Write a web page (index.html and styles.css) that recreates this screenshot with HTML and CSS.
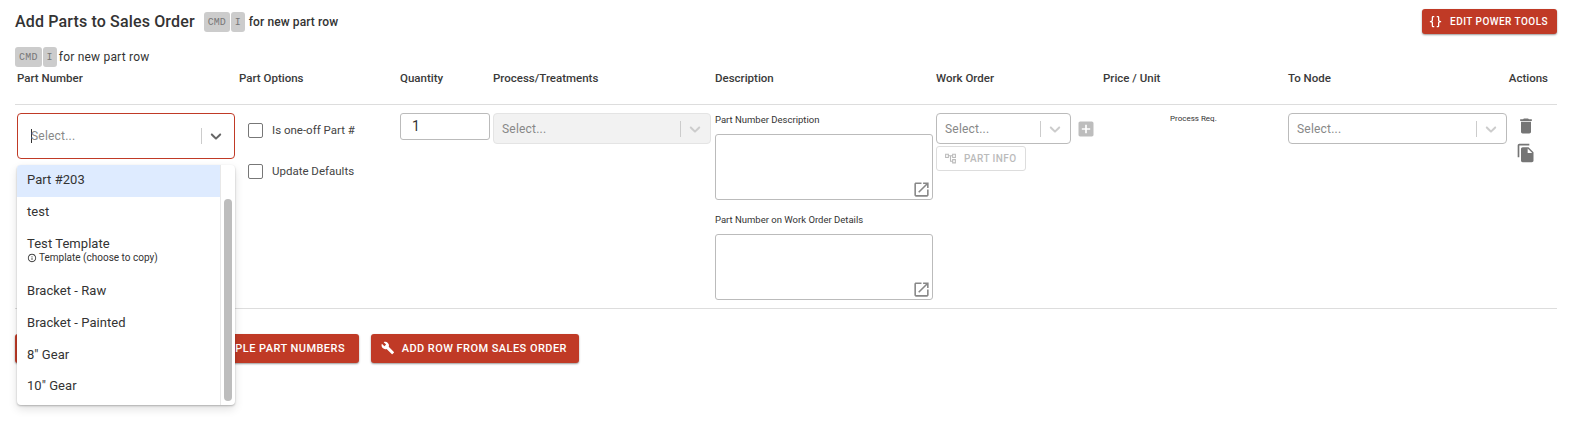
FILE: index.html
```html
<!DOCTYPE html>
<html lang="en">
<head>
  <meta charset="UTF-8" />
  <title>Add Parts to Sales Order</title>
  <link rel="stylesheet" href="styles.css">
</head>
<body>
  <svg class="defs" width="0" height="0">
    <symbol id="i-chevron" viewBox="0 0 20 20"><path d="M4.516 7.548c0.436-0.446 1.043-0.481 1.576 0l3.908 3.747 3.908-3.747c0.533-0.481 1.141-0.446 1.574 0 0.436 0.445 0.408 1.197 0 1.615-0.406 0.418-4.695 4.502-4.695 4.502-0.217 0.223-0.502 0.335-0.787 0.335s-0.57-0.112-0.789-0.335c0 0-4.287-4.084-4.695-4.502s-0.436-1.17 0-1.615z"/></symbol>
    <symbol id="i-open" viewBox="0 0 24 24"><path d="M19 19H5V5h7V3H5c-1.11 0-2 .9-2 2v14c0 1.1.89 2 2 2h14c1.1 0 2-.9 2-2v-7h-2v7zM14 3v2h3.59l-9.83 9.83 1.41 1.41L19 6.41V10h2V3h-7z"/></symbol>
  </svg>

  <!-- Header -->
  <div class="top-bar">
    <h1>Add Parts to Sales Order</h1>
    <span class="hint"><kbd>CMD</kbd><kbd>I</kbd><b>for new part row</b></span>
    <button class="btn btn-tools">
      <svg viewBox="0 0 24 24"><path d="M8,3A2,2 0 0,0 6,5V9A2,2 0 0,1 4,11H3V13H4A2,2 0 0,1 6,15V19A2,2 0 0,0 8,21H10V19H8V14A2,2 0 0,0 6,12A2,2 0 0,0 8,10V5H10V3M16,3A2,2 0 0,1 18,5V9A2,2 0 0,0 20,11H21V13H20A2,2 0 0,0 18,15V19A2,2 0 0,1 16,21H14V19H16V14A2,2 0 0,1 18,12A2,2 0 0,1 16,10V5H14V3H16Z"/></svg>
      Edit Power Tools
    </button>
  </div>
  <div class="hint hint-row"><kbd>CMD</kbd><kbd>I</kbd><span>for new part row</span></div>

  <!-- Table -->
  <div class="parts-table">
    <div class="grid head-row">
      <div>Part Number</div>
      <div>Part Options</div>
      <div>Quantity</div>
      <div>Process/Treatments</div>
      <div>Description</div>
      <div>Work Order</div>
      <div>Price / Unit</div>
      <div>To Node</div>
      <div class="right">Actions</div>
    </div>

    <div class="grid part-row">
      <div class="part-cell">
        <div class="select select-focus">
          <span class="placeholder"><i class="caret"></i>Select...</span>
          <span class="sep"></span>
          <svg class="chev"><use href="#i-chevron"/></svg>
        </div>
        <div class="menu">
          <div class="menu-list">
            <div class="option active">Part #203</div>
            <div class="option">test</div>
            <div class="option option-tall">
              Test Template
              <small>
                <svg viewBox="0 0 24 24"><path d="M11 7h2v2h-2zm0 4h2v6h-2zm1-9C6.48 2 2 6.48 2 12s4.48 10 10 10 10-4.48 10-10S17.52 2 12 2zm0 18c-4.41 0-8-3.59-8-8s3.59-8 8-8 8 3.59 8 8-3.59 8-8 8z"/></svg>
                Template (choose to copy)
              </small>
            </div>
            <div class="option">Bracket - Raw</div>
            <div class="option">Bracket - Painted</div>
            <div class="option">8" Gear</div>
            <div class="option option-last">10" Gear</div>
          </div>
          <div class="menu-track"><div class="menu-thumb"></div></div>
        </div>
      </div>

      <div class="options-cell">
        <label class="check"><i></i>Is one-off Part #</label>
        <label class="check"><i></i>Update Defaults</label>
      </div>

      <div class="qty-cell"><div class="qty">1</div></div>

      <div class="process-cell">
        <div class="select select-off">
          <span class="placeholder">Select...</span>
          <span class="sep"></span>
          <svg class="chev"><use href="#i-chevron"/></svg>
        </div>
      </div>

      <div class="desc-cell">
        <div class="small-label">Part Number Description</div>
        <div class="area"><svg class="open"><use href="#i-open"/></svg></div>
        <div class="small-label">Part Number on Work Order Details</div>
        <div class="area"><svg class="open"><use href="#i-open"/></svg></div>
      </div>

      <div class="wo-cell">
        <div class="wo-top">
          <div class="select">
            <span class="placeholder">Select...</span>
            <span class="sep"></span>
            <svg class="chev"><use href="#i-chevron"/></svg>
          </div>
          <svg class="add-box" viewBox="0 0 24 24"><path d="M19 3H5c-1.11 0-2 .9-2 2v14c0 1.1.89 2 2 2h14c1.1 0 2-.9 2-2V5c0-1.1-.9-2-2-2zm-2 10h-4v4h-2v-4H7v-2h4V7h2v4h4v2z"/></svg>
        </div>
        <button class="btn-info">
          <svg viewBox="0 0 24 24"><path d="M22 11V3h-7v3H9V3H2v8h7V8h2v10h4v3h7v-8h-7v3h-2V8h2v3h7zM7 9H4V5h3v4zm10 6h3v4h-3v-4zm0-10h3v4h-3V5z"/></svg>
          Part Info
        </button>
      </div>

      <div class="price-cell">Process Req.</div>

      <div class="node-cell">
        <div class="select">
          <span class="placeholder">Select...</span>
          <span class="sep"></span>
          <svg class="chev"><use href="#i-chevron"/></svg>
        </div>
      </div>

      <div class="actions-cell">
        <svg viewBox="0 0 24 24"><path d="M6 19c0 1.1.9 2 2 2h8c1.1 0 2-.9 2-2V7H6v12zM19 4h-3.5l-1-1h-5l-1 1H5v2h14V4z"/></svg>
        <svg viewBox="0 0 24 24"><path d="M16 1H4c-1.1 0-2 .9-2 2v14h2V3h12V1zm-1 4l6 6v10c0 1.1-.9 2-2 2H7.99C6.89 23 6 22.1 6 21l.01-14c0-1.1.89-2 1.99-2h7zm-1 7h5.5L14 6.5V12z"/></svg>
      </div>
    </div>
  </div>

  <!-- Footer buttons, the first one sits behind the open menu -->
  <div class="btn-row">
    <button class="btn btn-first" aria-label="Add row"></button>
    <button class="btn btn-multi">Add Multiple Part Numbers</button>
    <button class="btn btn-so">
      <svg viewBox="0 0 24 24"><path d="M22.7 19l-9.1-9.1c.9-2.3.4-5-1.5-6.9-2-2-5-2.4-7.4-1.3L9 6 6 9 1.6 4.7C.4 7.1.9 10.1 2.9 12.1c1.9 1.9 4.6 2.4 6.9 1.5l9.1 9.1c.4.4 1 .4 1.4 0l2.3-2.3c.5-.4.5-1.1.1-1.4z"/></svg>
      Add Row From Sales Order
    </button>
  </div>
</body>
</html>
```

FILE: styles.css
```css
* {
  margin: 0;
  padding: 0;
  box-sizing: border-box;
}

body {
  padding: 0 13px 0 15px;
  height: 445px;
  overflow: hidden;
  background-color: #fff;
  color: #212121;
  font-family: Roboto, sans-serif;
  font-size: 12px;
}

.defs {
  position: absolute;
}

.top-bar {
  display: flex;
  align-items: center;
  height: 43px;
}

.top-bar h1 {
  font-size: 16px;
  font-weight: 500;
  letter-spacing: 0.15px;
  margin-right: 9px;
  color: #333;
}

.hint {
  display: flex;
  align-items: center;
  font-size: 12px;
}

.hint b {
  font-weight: 500;
  margin-left: 3px;
  letter-spacing: 0.1px;
  color: #333;
}

.hint-row {
  height: 21px;
  margin-top: 3px;
  letter-spacing: 0.2px;
  color: #333;
}

.hint-row span {
  margin-left: 1px;
}

kbd {
  display: inline-block;
  height: 20px;
  line-height: 21px;
  padding: 0 4px;
  margin-right: 1px;
  background-color: #ccc;
  border-radius: 3px;
  color: #777;
  font-family: "Liberation Mono", monospace;
  font-size: 10px;
}

.btn {
  display: inline-flex;
  align-items: center;
  height: 29px;
  padding: 0 12px 0 8px;
  border: none;
  border-radius: 3px;
  background-color: #c03a26;
  color: #fff;
  font-family: Roboto, sans-serif;
  font-size: 11px;
  font-weight: 500;
  letter-spacing: 0.45px;
  text-transform: uppercase;
  white-space: nowrap;
  box-shadow: 0 1px 2px rgba(0, 0, 0, 0.4);
}

.btn svg {
  width: 16px;
  height: 16px;
  fill: #fff;
  margin-right: 7px;
}

.btn-tools {
  margin-left: auto;
  height: 25px;
  padding: 0 9px 0 6px;
  font-size: 10px;
  letter-spacing: 0.45px;
}

.btn-tools svg {
  width: 15px;
  height: 15px;
  margin-right: 7px;
}

.grid {
  display: grid;
  grid-template-columns: 222px 161px 93px 222px 221px 167px 185px 219px 1fr;
  padding-left: 2px;
  border-bottom: 1px solid #ddd;
}

.head-row {
  height: 38px;
  padding-top: 4px;
  font-size: 11.5px;
  font-weight: 500;
  color: #3a3a3a;
}

.head-row .right {
  text-align: right;
  padding-right: 9px;
  margin-left: -40px;
}

.part-row {
  height: 204px;
  padding-top: 8px;
}

.part-cell {
  position: relative;
}

.select {
  display: flex;
  align-items: center;
  width: 218px;
  height: 31px;
  padding-left: 8px;
  border: 1px solid #bbb;
  border-radius: 4px;
  background-color: #fff;
}

.select-focus {
  height: 46px;
  padding-left: 13px;
  border: 1.5px solid #c03a26;
}

.select-off {
  border-color: #e4e4e4;
  background-color: #f2f2f2;
}

.placeholder {
  flex: 1;
  color: #888;
  font-size: 12px;
  letter-spacing: 0.2px;
}

.caret {
  display: inline-block;
  width: 1px;
  height: 14px;
  margin-right: -1px;
  vertical-align: -3px;
  background-color: #333;
}

.sep {
  width: 1px;
  height: 16px;
  background-color: #ccc;
}

.chev {
  width: 18px;
  height: 18px;
  margin: 0 6px 0 5px;
  fill: #ccc;
}

.select-focus .chev {
  margin-right: 9px;
  fill: #666;
}

.menu {
  position: absolute;
  top: 52px;
  left: 0;
  z-index: 5;
  display: flex;
  width: 218px;
  height: 240px;
  border-radius: 4px;
  background-color: #fff;
  box-shadow: 0 1px 2px rgba(0, 0, 0, 0.25), 0 4px 10px rgba(0, 0, 0, 0.12);
  overflow: hidden;
}

.menu-list {
  flex: 1;
  border-right: 1px solid #e8e8e8;
}

.option {
  height: 32px;
  padding: 7px 10px;
  font-size: 13px;
  line-height: 15px;
  letter-spacing: 0.05px;
  color: #333;
}

.option.active {
  background-color: #deebff;
}

.option-tall {
  height: 47px;
}

.option-last {
  padding-top: 6px;
}

.option small {
  display: flex;
  align-items: center;
  margin-top: 1px;
  font-size: 10px;
  line-height: 12px;
  letter-spacing: 0;
}

.option small svg {
  width: 10px;
  height: 10px;
  margin-right: 2px;
  fill: #333;
}

.menu-track {
  width: 14px;
  padding: 34px 3px 4px;
}

.menu-thumb {
  height: 100%;
  border-radius: 4px;
  background-color: #bdbdbd;
}

.options-cell {
  padding: 9px 0 0 9px;
}

.check {
  display: flex;
  align-items: center;
  height: 16px;
  margin-bottom: 25px;
  font-size: 11.5px;
  color: #444;
}

.check i {
  width: 15px;
  height: 15px;
  margin-right: 9px;
  border: 1.5px solid #777;
  border-radius: 2px;
}

.qty {
  width: 90px;
  height: 27px;
  padding-left: 11px;
  border: 1px solid #bbb;
  border-radius: 3px;
  font-size: 14px;
  line-height: 25px;
  color: #333;
}

.small-label {
  height: 21px;
  font-size: 9.5px;
  line-height: 14px;
  color: #333;
}

.area {
  position: relative;
  width: 218px;
  height: 66px;
  margin-bottom: 13px;
  border: 1px solid #bbb;
  border-radius: 3px;
}

.open {
  position: absolute;
  right: 1px;
  bottom: 0;
  width: 19px;
  height: 19px;
  fill: #888;
}

.wo-top {
  display: flex;
  align-items: center;
}

.wo-top .select {
  width: 135px;
}

.add-box {
  width: 20px;
  height: 20px;
  margin-left: 5px;
  fill: #bdbdbd;
}

.btn-info {
  display: flex;
  align-items: center;
  width: 90px;
  height: 25px;
  margin-top: 2px;
  padding-left: 7px;
  border: 1px solid #ddd;
  border-radius: 3px;
  background-color: #fff;
  color: #bbb;
  font-family: Roboto, sans-serif;
  font-size: 10px;
  font-weight: 500;
  letter-spacing: 0.4px;
  text-transform: uppercase;
}

.btn-info svg {
  width: 13px;
  height: 13px;
  margin-right: 7px;
  fill: #bbb;
}

.price-cell {
  padding: 1px 0 0 67px;
  font-size: 8px;
  color: #333;
}

.node-cell .select {
  width: 219px;
}

.actions-cell {
  display: flex;
  flex-direction: column;
  align-items: flex-end;
  gap: 7px;
  padding: 3px 21px 0 0;
  margin-left: -40px;
}

.actions-cell svg {
  width: 20px;
  height: 20px;
  fill: #757575;
}

.btn-row {
  display: flex;
  gap: 12px;
  margin-top: 25px;
}

.btn-first {
  width: 97px;
  margin-right: -8px;
}

.btn-multi {
  width: 243px;
  padding: 0 14px 1px 8px;
  justify-content: flex-end;
}

.btn-so {
  width: 208px;
  padding: 0 12px 1px 10px;
}
```
